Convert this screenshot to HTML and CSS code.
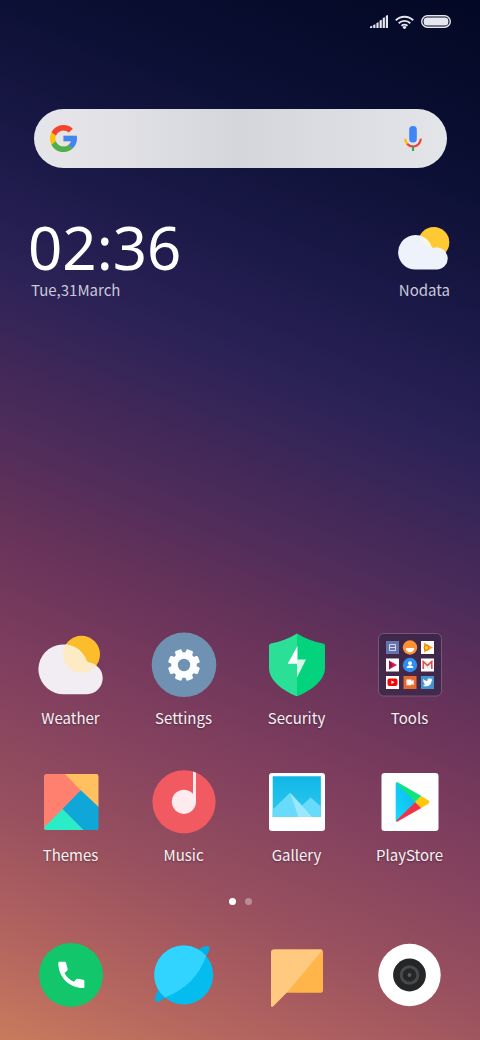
FILE: index.html
```html
<!DOCTYPE html>
<html lang="en">
<head>
<meta charset="utf-8">
<meta name="viewport" content="width=device-width, initial-scale=1">
<title>Home screen</title>
<link rel="stylesheet" href="styles.css">
</head>
<body>
<div class="screen">
  <header class="status">
    <svg width="18" height="13" viewBox="0 0 18 13" role="img" aria-label="Signal"><path fill="#e6e6ee" d="M0 11.500l2.200-.8V13H0zM3.200 10l2.200-.8V13H3.200zM6.400 8l2.200-.8V13H6.400zM9.600 5.500l2.200-.8V13H9.600zM12.700 3l2.200-.8V13h-2.200zM15.800.8L18 0v13h-2.200z"/></svg>
    <svg class="wifi" width="19" height="14" viewBox="0 0 19 14" role="img" aria-label="Wi-Fi"><g fill="none" stroke="#e6e6ee" stroke-width="1.9"><path d="M.8 5.200a12.500 12.500 0 0 1 17.400 0M3.700 8.200a8.300 8.300 0 0 1 11.600 0M6.500 10.900a4.300 4.300 0 0 1 6 0"/></g><circle cx="9.500" cy="12.300" r="1.600" fill="#e6e6ee"/></svg>
    <svg width="30" height="13" viewBox="0 0 30 13" role="img" aria-label="Battery"><rect x=".7" y=".7" width="28.600" height="11.600" rx="5.800" fill="none" stroke="#e6e6ee" stroke-width="1.400"/><rect x="2.600" y="2.600" width="24.800" height="7.800" rx="3.500" fill="#e6e6ee"/></svg>
  </header>

  <form class="search" role="search">
    <button class="search-button" type="button" aria-label="Google">
      <svg width="27" height="27" viewBox="4 4 40 40"><path fill="#FFC107" d="M43.611 20.083H42V20H24v8h11.303c-1.649 4.657-6.080 8-11.303 8-6.627 0-12-5.373-12-12s5.373-12 12-12c3.059 0 5.842 1.154 7.961 3.039l5.657-5.657C34.046 6.053 29.268 4 24 4 12.955 4 4 12.955 4 24s8.955 20 20 20 20-8.955 20-20c0-1.341-.138-2.650-.389-3.917z"/><path fill="#F44336" d="M6.306 14.691l6.571 4.819C14.655 15.108 18.961 12 24 12c3.059 0 5.842 1.154 7.961 3.039l5.657-5.657C34.046 6.053 29.268 4 24 4 16.318 4 9.656 8.337 6.306 14.691z"/><path fill="#4CAF50" d="M24 44c5.166 0 9.860-1.977 13.409-5.192l-6.190-5.238C29.211 35.091 26.715 36 24 36c-5.202 0-9.619-3.317-11.283-7.946l-6.522 5.025C9.505 39.556 16.227 44 24 44z"/><path fill="#4285F4" d="M43.611 20.083H24v8h11.303c-.792 2.237-2.231 4.166-4.087 5.571l6.193 5.154C36.971 39.205 44 34 44 24c0-1.341-.138-2.650-.389-3.917z"/></svg>
    </button>
    <input class="search-input" type="text" aria-label="Search">
    <button class="search-button" type="button" aria-label="Voice search">
      <svg width="18" height="25" viewBox="0 0 18 25"><rect x="5.200" width="7.600" height="16.500" rx="3.500" fill="#4285F4"/><g fill="none" stroke-width="2.200"><path stroke="#FBBC05" d="M1.200 12.800c0 2 .8 4 2.200 5.400"/><path stroke="#EA4335" d="M3.200 18c1.500 1.600 3.500 2.500 5.800 2.500 4.300 0 7.700-3.400 7.800-7.700"/><path stroke="#34A853" d="M9 21v4"/></g></svg>
    </button>
  </form>

  <section class="widgets">
    <div class="clock">
      <time class="time">02:36</time>
      <span class="caption">Tue,31March</span>
    </div>
    <div class="forecast">
      <svg width="52" height="43" viewBox="0 0 52 43" aria-hidden="true"><circle cx="35.800" cy="15.500" r="15.500" fill="#ffc933"/><path fill="#eef3fb" d="M17.500 42.500a17.200 17.200 0 1 1 16.200-22.500q.8 1.200 2.500.8a11 11 0 1 1 2 21.700z"/><path fill="#fff6de" opacity=".6" d="M22 8.500A17 17 0 0 1 33.700 20q.8 1.200 2.500.8 3-.6 5.800.3a15.500 15.500 0 0 1-20-12.600z"/></svg>
      <span class="caption">Nodata</span>
    </div>
  </section>

  <main class="apps">
    <a class="app" href="#weather">
      <svg class="icon" viewBox="0 0 66 66" aria-hidden="true"><defs><clipPath id="sun"><circle cx="43.500" cy="22.300" r="18.500"/></clipPath></defs><circle cx="43.500" cy="22.300" r="18.500" fill="#fbbd2c"/><path fill="#f1edf2" d="M26.500 62.200a24.900 24.900 0 1 1 22.200-33.500q.8 1.500 2.500 1.700A16 16 0 0 1 49 62.200z"/><path clip-path="url(#sun)" fill="#fdebc6" d="M26.500 62.200a24.900 24.900 0 1 1 22.200-33.500q.8 1.500 2.500 1.700A16 16 0 0 1 49 62.200z"/></svg>
      <span class="label">Weather</span>
    </a>
    <a class="app" href="#settings">
      <svg class="icon" viewBox="0 0 66 66" aria-hidden="true"><circle cx="33" cy="32.800" r="32.300" fill="#7092b2"/><g fill="#fcfdfe" transform="translate(33 33)"><circle r="12.800"/><g transform="rotate(22.500)"><g id="teeth"><rect x="-3.600" y="-16" width="7.200" height="32" rx="1.400"/><rect x="-16" y="-3.600" width="32" height="7.200" rx="1.400"/></g><use href="#teeth" transform="rotate(45)"/></g></g><circle cx="33" cy="33" r="6.200" fill="#7092b2"/></svg>
      <span class="label">Settings</span>
    </a>
    <a class="app" href="#security">
      <svg class="icon" viewBox="0 0 66 66" aria-hidden="true"><path fill="#2bdf97" d="M33 1.500C25 6.500 16 10 7 11.500q-2 .3-2 2V36c0 12 13 22.500 28 28.300z"/><path fill="#04d37e" d="M33 1.500C41 6.500 50 10 59 11.500q2 .3 2 2V36c0 12-13 22.500-28 28.300z"/><path fill="#fff" d="M33.500 14L23.700 31.800H33.500z"/><path fill="#d4f7e8" d="M33 27.500h9L33 45.500z"/></svg>
      <span class="label">Security</span>
    </a>
    <a class="app" href="#tools">
      <svg class="icon" viewBox="0 0 66 66" aria-hidden="true">
        <rect x="1.500" y="1.500" width="63" height="62.500" rx="5" fill="#2e2440" fill-opacity=".62" stroke="#8d7396" stroke-opacity=".6"/>
        <rect x="9" y="9" width="13" height="13" fill="#6673ad"/><path fill="none" stroke="#d5d8eb" d="M12.500 12.500h6v6h-6zM12.500 15.500h6"/>
        <circle cx="33" cy="15.500" r="7.200" fill="#fb9236"/><path fill="#fff" d="M28.700 16h8.600a4.300 4.300 0 0 1-8.600 0z"/>
        <rect x="44" y="9" width="13" height="13" fill="#fff"/><path fill="#fba51c" d="M47 10.500l9 5-9 5z"/><circle cx="49.500" cy="15.800" r="2.400" fill="#fbd126" stroke="#e86a24"/>
        <rect x="9" y="26.500" width="13" height="13" fill="#fff"/><path fill="#d81b60" d="M12 28.500l8 4.500-8 4.500z"/><path fill="#a0103f" d="M12 28.500l4 4.500-4 4.500z"/>
        <circle cx="33" cy="33" r="7.200" fill="#2d8ff2"/><circle cx="33" cy="31.200" r="1.900" fill="#fff"/><path fill="#fff" d="M29.800 36v-1.200q1.200-1.500 3.200-1.500t3.200 1.500V36z"/>
        <rect x="44" y="26.500" width="13" height="13" fill="#fff"/><path fill="#eee" d="M46 29.500h9v7h-9z"/><path fill="none" stroke="#dd4b3e" stroke-width="1.500" d="M46.200 37v-7.500l4.300 4 4.300-4V37"/>
        <rect x="9" y="44" width="13" height="13" fill="#fff"/><rect x="10.500" y="46.500" width="10" height="7.500" rx="2" fill="#f00808"/><path fill="#fff" d="M14.400 48.500l3 1.700-3 1.700z"/>
        <rect x="26.500" y="44" width="13" height="13" fill="#e76a32"/><path fill="#fff" d="M29.500 47.500h5v1.700l2.200-1.500v5.500l-2.200-1.500v1.600h-5z"/>
        <rect x="44" y="44" width="13" height="13" fill="#4394d0"/><path fill="#fff" d="M46.200 47q1.800 2 4.200 2.100c-.5-2.800 2.400-3.600 3.600-2.200l1.500-.5-.9 1.400 1 .2-1.100 1c-.1 4.600-5 6.500-8.600 4.400q1.600 0 2.700-.8-1.300-.3-1.700-1.400h.8q-1.500-.7-1.500-2.100l.8.200q-1.400-1.100-.8-2.300z"/>
      </svg>
      <span class="label">Tools</span>
    </a>
    <a class="app" href="#themes">
      <svg class="icon" viewBox="0 0 66 66" aria-hidden="true"><defs><clipPath id="tile"><rect x="6" y="5" width="54.500" height="56" rx="2.500"/></clipPath></defs><g clip-path="url(#tile)"><path fill="#ff806e" d="M6 5h54v56H6z"/><path fill="#ffc060" d="M27 5h34v33.500L42.700 21.300z"/><path fill="#0fa7d7" d="M42.700 21.300L61 38.500V61H45L24.500 40z"/><path fill="#2aecc6" d="M24.500 40L45.500 61H6v-2.500z"/></g></svg>
      <span class="label">Themes</span>
    </a>
    <a class="app" href="#music">
      <svg class="icon" viewBox="0 0 66 66" aria-hidden="true"><circle cx="33" cy="32.800" r="31.600" fill="#f25a62"/><circle cx="32.900" cy="32.800" r="12.100" fill="#fdebed"/><path fill="#fdebed" d="M42 2.500l3 1.200v29.100h-3z"/></svg>
      <span class="label">Music</span>
    </a>
    <a class="app" href="#gallery">
      <svg class="icon" viewBox="0 0 66 66" aria-hidden="true"><defs><linearGradient id="sky" x2="0" y2="1"><stop stop-color="#11b6e6"/><stop offset="1" stop-color="#2dc9f0"/></linearGradient></defs><rect x="5" y="4" width="56" height="58" rx="3" fill="#fff"/><path fill="url(#sky)" d="M8.700 7.300h48.200V48H8.700z"/><path fill="#68dafa" d="M8.700 40.500L26 23.700 48 48H8.700z"/><path fill="#68dafa" d="M38 36.500l8.700-8 10.200 9V48H42z"/><path fill="#9be8fd" d="M26 23.700L38 36.500 47.800 48H34.500z"/></svg>
      <span class="label">Gallery</span>
    </a>
    <a class="app" href="#play">
      <svg class="icon" viewBox="0 0 66 66" aria-hidden="true"><defs><linearGradient id="blue" y1="1" x2="1" y2="0"><stop stop-color="#18d7fb"/><stop offset="1" stop-color="#08b9ef"/></linearGradient></defs><rect x="4.500" y="4" width="57" height="58" rx="3" fill="#fff"/><path fill="url(#blue)" d="M18.700 15q0-2 1.500-1.500L38.500 33 20.200 52.500q-1.500.3-1.500-1.500z"/><path fill="#0fe57a" d="M19 13.800q1-1 2.500 0L44.300 27l-6 6z"/><path fill="#ef3349" d="M19 52q1 1 2.500 0l22.800-13-6-6z"/><path fill="#ffc80b" d="M44.300 27l7.400 4.500q1.500 1.500 0 3L44.300 39l-6-6z"/></svg>
      <span class="label">PlayStore</span>
    </a>
  </main>

  <nav class="pages" aria-label="Pages">
    <a class="dot dot-current" href="#page1" aria-label="Page 1"></a>
    <a class="dot" href="#page2" aria-label="Page 2"></a>
  </nav>

  <footer class="dock">
    <a class="app" href="#phone" aria-label="Phone">
      <svg class="icon" viewBox="0 0 66 66"><circle cx="33" cy="33" r="32" fill="#11c66b"/><path fill="#fff" d="M21.300 19.700h5.500q1 0 1.200 1l1.700 6.500q.2.900-.6 1.600l-2.600 2.200q3 6 9.500 8.700l2-2.200q.7-.9 1.700-.7l5.700.9q1 .2 1 1.200V45q0 1-1 1C31 46 20.300 35 20.300 20.700q0-1 1-1z"/></svg>
    </a>
    <a class="app" href="#browser" aria-label="Browser">
      <svg class="icon" viewBox="0 0 66 66"><path fill="#05aee6" d="M46 8q9-5 12-3.700Q60.500 6.500 54 16zM7 48q-4.500 9-2.700 11.300Q7 61.300 15.500 55z"/><circle cx="32.800" cy="33" r="29.400" fill="#04bced"/><path fill="#31d4ff" d="M14 55.600Q45 43 55.100 13.900A29.400 29.400 0 1 0 14 55.600z"/></svg>
    </a>
    <a class="app" href="#messages" aria-label="Messages">
      <svg class="icon" viewBox="0 0 66 66"><path fill="#ffb549" d="M9.500 7.500h47q2.500 0 2.500 2.500v38.300q0 2.500-2.500 2.500H22z"/><path fill="#ffca80" d="M9.500 7.500h47q1.200 0 1.900.8L22.700 50.800 9 64.500q-2 1.300-2-1V10q0-2.500 2.500-2.500z"/></svg>
    </a>
    <a class="app" href="#camera" aria-label="Camera">
      <svg class="icon" viewBox="0 0 66 66"><circle cx="32.500" cy="33" r="31.200" fill="#fff"/><circle cx="32.500" cy="33" r="16.400" fill="#242628"/><circle cx="32.500" cy="33" r="8.300" fill="#242628" stroke="#48494c" stroke-width="3"/><circle cx="32.500" cy="33" r="1.900" fill="#5a5b5e"/></svg>
    </a>
  </footer>
</div>
</body>
</html>
```

FILE: styles.css
```css
* {
  box-sizing: border-box;
}

body {
  margin: 0;
  font-family: "Noto Sans CJK SC", "Noto Sans", sans-serif;
  color: #fff;
}

.screen {
  display: flex;
  flex-direction: column;
  min-height: 100vh;
  padding: 15px 0 32px;
  background: linear-gradient(202deg, #020824 0%, #0b0f33 14%, #191846 26%, #2b2256 37%, #4b2b5a 49%, #6b345a 60%, #7d3d5e 68%, #98505f 81%, #b4655f 92%, #c97b5d 100%);
}

.status {
  display: flex;
  justify-content: flex-end;
  gap: 7px;
  height: 13px;
  padding-right: 29px;
}

.search {
  display: flex;
  align-items: center;
  height: 59px;
  margin: 81px 33px 0 34px;
  padding: 0 16px;
  border-radius: 30px;
  background: linear-gradient(90deg, #e6e5ea 0%, #e1e1e6 20%, #d4d6db 50%, #dcdde2 75%, #e4e5e9 100%);
}

.search-button {
  display: flex;
  padding: 0;
  border: 0;
  background: none;
}

.search-button:last-child {
  margin-right: 9px;
}

.search-input {
  flex: 1;
  min-width: 0;
  height: 100%;
  padding: 0 16px;
  border: 0;
  outline: 0;
  background: none;
  font: inherit;
  color: #222;
}

.widgets {
  display: flex;
  align-items: flex-end;
  justify-content: space-between;
  margin-top: 49px;
  padding: 0 30px 0 31px;
}

.clock,
.forecast {
  display: flex;
  flex-direction: column;
}

.forecast {
  align-items: flex-end;
  gap: 8px;
}

.time {
  font-family: "Noto Sans", sans-serif;
  font-size: 60px;
  line-height: 61px;
  margin-left: -3px;
}

.caption {
  font-size: 15px;
  line-height: 24px;
  color: #cbc9d9;
}

.apps {
  display: grid;
  grid-template-columns: repeat(4, 1fr);
  row-gap: 39px;
  margin-top: auto;
  padding: 0 14px;
}

.app {
  display: flex;
  flex-direction: column;
  align-items: center;
  gap: 8px;
  color: inherit;
  text-decoration: none;
}

.icon {
  display: block;
  width: 66px;
  height: 66px;
}

.label {
  font-size: 15px;
  line-height: 24px;
  color: #f6f2f6;
  text-shadow: 0 1px 2px rgba(0, 0, 0, 0.35);
}

.pages {
  display: flex;
  justify-content: center;
  gap: 9px;
  margin-top: 31px;
}

.dot {
  width: 7px;
  height: 7px;
  border-radius: 50%;
  background: rgba(255, 255, 255, 0.35);
}

.dot-current {
  background: #fff;
}

.dock {
  display: grid;
  grid-template-columns: repeat(4, 1fr);
  margin-top: 37px;
  padding: 0 14px;
}
```
